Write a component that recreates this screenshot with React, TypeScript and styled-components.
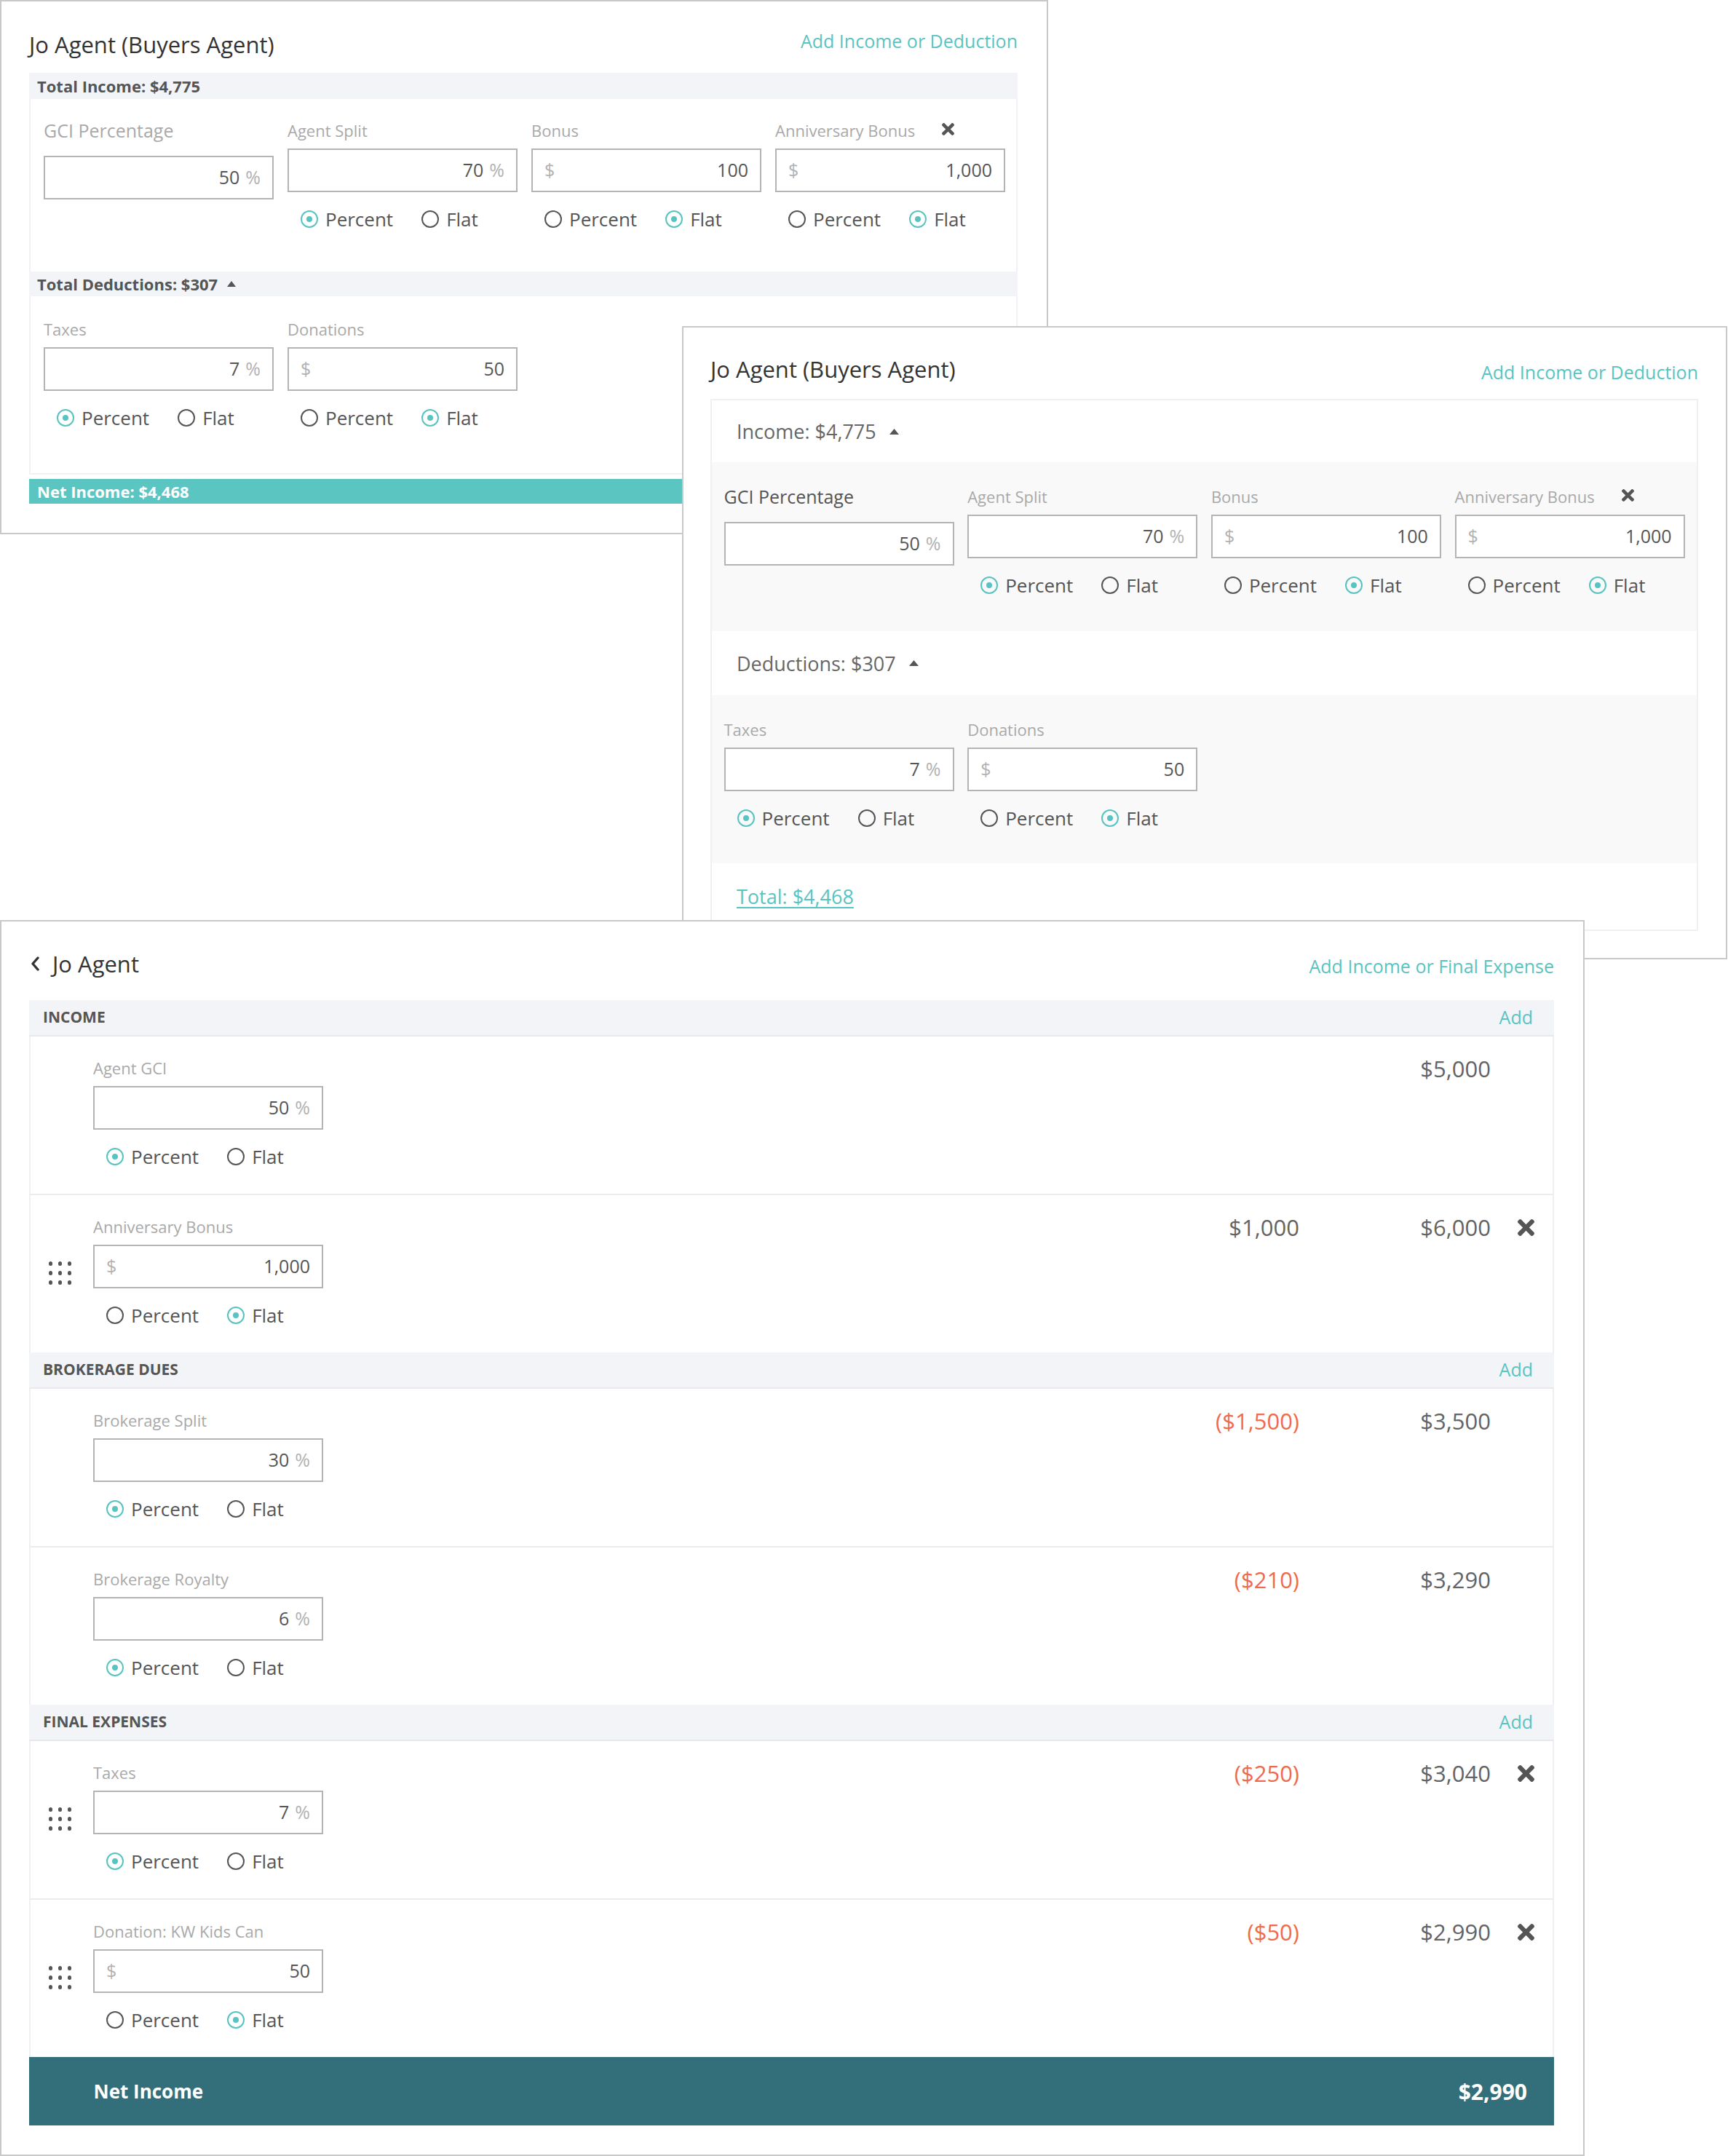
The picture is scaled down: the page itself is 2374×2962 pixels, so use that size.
import React from 'react';
import styled, { createGlobalStyle } from 'styled-components';

const TEAL = '#58c4c1';
const TEXT = '#555555';
const LIGHT = '#a9a9a9';

type Mode = 'percent' | 'flat';

interface FieldData {
  label: string;
  value: string;
  mode: Mode;
  big?: boolean;
  dark?: boolean;
  noRadios?: boolean;
  removable?: boolean;
}

interface LineItem extends FieldData {
  change?: string;
  negative?: boolean;
  running: string;
  draggable?: boolean;
  deletable?: boolean;
}

interface Section {
  title: string;
  items: LineItem[];
}

const GlobalStyle = createGlobalStyle`
  html, body { margin: 0; padding: 0; background: #ffffff; }
  body {
    font-family: 'Open Sans', 'Noto Sans', 'Liberation Sans', sans-serif;
    -webkit-font-smoothing: antialiased;
  }
  * { box-sizing: border-box; }
`;

const Canvas = styled.div`
  position: relative;
  width: 2374px;
  height: 2962px;
  overflow: hidden;
  background: #ffffff;
`;

const Win = styled.section<{ $x: number; $y: number; $w: number; $h: number; $z: number; $pad: string }>`
  position: absolute;
  left: ${(p) => p.$x}px;
  top: ${(p) => p.$y}px;
  width: ${(p) => p.$w}px;
  height: ${(p) => p.$h}px;
  z-index: ${(p) => p.$z};
  background: #ffffff;
  border: 2px solid #c9c9c9;
  padding: ${(p) => p.$pad};
  display: flex;
  flex-direction: column;
`;

const TitleRow = styled.header<{ $gap: number }>`
  display: flex;
  justify-content: space-between;
  align-items: flex-start;
  height: 42px;
  margin-bottom: ${(p) => p.$gap}px;
  flex: none;
`;

const Title = styled.h1`
  margin: 0;
  display: flex;
  align-items: center;
  gap: 18px;
  font-size: 31px;
  line-height: 42px;
  font-weight: 400;
  color: #333333;
`;

const BackIcon = styled.svg`
  margin-left: 3px;
  flex: none;
`;

const AddLink = styled.a<{ $offset: number }>`
  font-size: 25px;
  line-height: 42px;
  color: ${TEAL};
  margin-top: ${(p) => p.$offset}px;
  text-decoration: none;
  cursor: pointer;
`;

/* ---------- shared field ---------- */

const Field = styled.div`
  display: flex;
  flex-direction: column;
  width: 316px;
`;

const FieldLabel = styled.div<{ $big?: boolean; $dark?: boolean }>`
  display: flex;
  align-items: center;
  height: 32px;
  font-size: ${(p) => (p.$big ? 25 : 22)}px;
  line-height: 32px;
  color: ${(p) => (p.$dark ? TEXT : LIGHT)};
  margin-bottom: ${(p) => (p.$big ? 19 : 9)}px;
  white-space: nowrap;
`;

const LabelRemove = styled.span`
  display: inline-flex;
  margin-left: 37px;
  margin-top: -4px;
`;

const InputBox = styled.div`
  height: 60px;
  border: 2px solid #b4b4b4;
  background: #ffffff;
  display: flex;
  align-items: center;
  justify-content: space-between;
  padding: 0 16px 2px;
  font-size: 25px;
  color: ${TEXT};
`;

const Affix = styled.span`
  color: #b2b2b2;
`;

const Value = styled.span`
  display: flex;
  align-items: baseline;
  gap: 8px;
`;

const RadioRow = styled.div`
  display: flex;
  align-items: center;
  height: 36px;
  margin-top: 19px;
  padding-left: 18px;
  gap: 39px;
`;

const RadioOption = styled.label`
  display: flex;
  align-items: center;
  gap: 10px;
  font-size: 26px;
  color: ${TEXT};
  white-space: nowrap;
`;

const RadioCircle = styled.span<{ $on: boolean }>`
  width: 24px;
  height: 24px;
  border-radius: 50%;
  border: 2px solid ${(p) => (p.$on ? TEAL : '#555555')};
  display: flex;
  align-items: center;
  justify-content: center;
  flex: none;
  &::after {
    content: '';
    width: 8px;
    height: 8px;
    border-radius: 50%;
    background: ${(p) => (p.$on ? TEAL : 'transparent')};
  }
`;

function XIcon({ size, color = '#555555' }: { size: number; color?: string }) {
  return (
    <svg width={size} height={size} viewBox="0 80 352 352" aria-hidden="true">
      <path
        fill={color}
        d="M242.72 256l100.07-100.07c12.28-12.28 12.28-32.19 0-44.48l-22.24-22.240c-12.28-12.28-32.19-12.28-44.48 0L176 189.28 75.93 89.21c-12.28-12.28-32.19-12.28-44.48 0L9.21 111.45c-12.28 12.28-12.28 32.19 0 44.48L109.28 256 9.21 356.07c-12.28 12.28-12.28 32.19 0 44.48l22.24 22.24c12.28 12.28 32.2 12.28 44.48 0L176 322.72l100.07 100.07c12.28 12.28 32.2 12.28 44.48 0l22.24-22.24c12.28-12.28 12.28-32.19 0-44.48L242.72 256z"
      />
    </svg>
  );
}

function Caret({ w = 12, h = 8 }: { w?: number; h?: number }) {
  return (
    <svg width={w} height={h} viewBox={`0 0 ${w} ${h}`} aria-hidden="true">
      <path d={`M0 ${h} L${w / 2} 0 L${w} ${h} Z`} fill="#555555" />
    </svg>
  );
}

function ModeRadios({ mode }: { mode: Mode }) {
  return (
    <RadioRow>
      <RadioOption>
        <RadioCircle $on={mode === 'percent'} />
        Percent
      </RadioOption>
      <RadioOption>
        <RadioCircle $on={mode === 'flat'} />
        Flat
      </RadioOption>
    </RadioRow>
  );
}

function AmountField({ f }: { f: FieldData }) {
  return (
    <Field>
      <FieldLabel $big={f.big} $dark={f.dark}>
        {f.label}
        {f.removable && (
          <LabelRemove>
            <XIcon size={17} />
          </LabelRemove>
        )}
      </FieldLabel>
      <InputBox>
        <Affix>{f.mode === 'flat' ? '$' : ''}</Affix>
        <Value>
          {f.value}
          {f.mode === 'percent' && <Affix>%</Affix>}
        </Value>
      </InputBox>
      {!f.noRadios && <ModeRadios mode={f.mode} />}
    </Field>
  );
}

/* ---------- panel 1 ---------- */

const SummaryBar = styled.div<{ $h: number; $bg: string; $color: string; $mt?: number }>`
  height: ${(p) => p.$h}px;
  margin-top: ${(p) => p.$mt ?? 0}px;
  background: ${(p) => p.$bg};
  color: ${(p) => p.$color};
  display: flex;
  align-items: center;
  gap: 13px;
  padding-left: 11px;
  font-size: 22px;
  font-weight: 700;
  flex: none;
`;

const FieldBox = styled.div<{ $pt: number; $pb: number; $bottom?: boolean }>`
  border-left: 2px solid #f1f1f3;
  border-right: 2px solid #f1f1f3;
  border-bottom: ${(p) => (p.$bottom ? '2px solid #f1f1f3' : 'none')};
  padding: ${(p) => p.$pt}px 16px ${(p) => p.$pb}px 18px;
  flex: none;
`;

const FieldGrid = styled.div<{ $gap: number }>`
  display: grid;
  grid-template-columns: repeat(4, 316px);
  column-gap: ${(p) => p.$gap}px;
  align-items: start;
`;

/* ---------- panel 2 ---------- */

const Ledger = styled.div`
  border: 2px solid #f0f0f0;
  display: flex;
  flex-direction: column;
  flex: none;
`;

const LedgerHead = styled.div<{ $h: number }>`
  height: ${(p) => p.$h}px;
  background: #ffffff;
  display: flex;
  align-items: center;
  gap: 18px;
  padding-left: 34px;
  font-size: 27px;
  color: #666666;
`;

const LedgerBody = styled.div<{ $pt: number; $pb: number }>`
  background: #f9f9f9;
  padding: ${(p) => p.$pt}px 16px ${(p) => p.$pb}px 16.5px;
`;

const TotalLink = styled.a`
  font-size: 27px;
  color: ${TEAL};
  text-decoration: underline;
  text-underline-offset: 4px;
  cursor: pointer;
`;

/* ---------- panel 3 ---------- */

const SectionHead = styled.div`
  height: 50px;
  background: #f3f4f7;
  border-bottom: 2px solid #e8e9ec;
  display: flex;
  align-items: center;
  justify-content: space-between;
  padding: 0 29px 2px 19px;
  flex: none;
`;

const SectionTitle = styled.span`
  font-size: 21px;
  font-weight: 700;
  color: ${TEXT};
  text-transform: uppercase;
`;

const SectionAdd = styled.a`
  font-size: 25px;
  color: ${TEAL};
  cursor: pointer;
`;

const ItemRow = styled.div<{ $first: boolean }>`
  display: flex;
  align-items: flex-start;
  border-left: 2px solid #efeff1;
  border-right: 2px solid #efeff1;
  border-top: ${(p) => (p.$first ? 'none' : '2px solid #ececee')};
  padding: 27px 25.5px 33px 0;
  flex: none;
`;

const Handle = styled.div`
  width: 86px;
  align-self: stretch;
  display: flex;
  align-items: center;
  justify-content: center;
  padding-right: 5px;
`;

const DotGrid = styled.div`
  display: grid;
  grid-template-columns: repeat(3, 5.5px);
  grid-auto-rows: 5.5px;
  gap: 7.5px;
  margin-top: 4px;
`;

const Dot = styled.span`
  border-radius: 50%;
  background: #555555;
`;

const Spacer = styled.div`
  flex: 1;
`;

const AmountCell = styled.div<{ $w: number; $neg?: boolean }>`
  width: ${(p) => p.$w}px;
  text-align: right;
  font-size: 31px;
  line-height: 34px;
  margin-top: 0;
  color: ${(p) => (p.$neg ? '#f06b4c' : '#646464')};
  flex: none;
`;

const DeleteSlot = styled.div`
  width: 23px;
  height: 34px;
  margin-left: 36.5px;
  display: flex;
  align-items: center;
  flex: none;
`;

const NetBand = styled.div`
  height: 94px;
  background: #336f7a;
  color: #ffffff;
  display: flex;
  align-items: center;
  justify-content: space-between;
  padding: 0 37px 0 88.5px;
  font-weight: 700;
  flex: none;
`;

const NetLabel = styled.span`
  font-size: 26px;
`;

const NetValue = styled.span`
  font-size: 30px;
`;

/* ---------- data ---------- */

const incomeFields1: FieldData[] = [
  { label: 'GCI Percentage', value: '50', mode: 'percent', big: true, noRadios: true },
  { label: 'Agent Split', value: '70', mode: 'percent' },
  { label: 'Bonus', value: '100', mode: 'flat' },
  { label: 'Anniversary Bonus', value: '1,000', mode: 'flat', removable: true },
];

const deductionFields: FieldData[] = [
  { label: 'Taxes', value: '7', mode: 'percent' },
  { label: 'Donations', value: '50', mode: 'flat' },
];

const incomeFields2: FieldData[] = incomeFields1.map((f, i) => (i === 0 ? { ...f, dark: true } : f));

const sections: Section[] = [
  {
    title: 'Income',
    items: [
      { label: 'Agent GCI', value: '50', mode: 'percent', running: '$5,000' },
      {
        label: 'Anniversary Bonus',
        value: '1,000',
        mode: 'flat',
        change: '$1,000',
        running: '$6,000',
        draggable: true,
        deletable: true,
      },
    ],
  },
  {
    title: 'Brokerage Dues',
    items: [
      { label: 'Brokerage Split', value: '30', mode: 'percent', change: '($1,500)', negative: true, running: '$3,500' },
      { label: 'Brokerage Royalty', value: '6', mode: 'percent', change: '($210)', negative: true, running: '$3,290' },
    ],
  },
  {
    title: 'Final Expenses',
    items: [
      {
        label: 'Taxes',
        value: '7',
        mode: 'percent',
        change: '($250)',
        negative: true,
        running: '$3,040',
        draggable: true,
        deletable: true,
      },
      {
        label: 'Donation: KW Kids Can',
        value: '50',
        mode: 'flat',
        change: '($50)',
        negative: true,
        running: '$2,990',
        draggable: true,
        deletable: true,
      },
    ],
  },
];

function DragDots() {
  return (
    <DotGrid>
      {Array.from({ length: 9 }).map((_, i) => (
        <Dot key={i} />
      ))}
    </DotGrid>
  );
}

function LedgerRow({ item, first }: { item: LineItem; first: boolean }) {
  return (
    <ItemRow $first={first}>
      <Handle>{item.draggable && <DragDots />}</Handle>
      <AmountField f={item} />
      <Spacer />
      <AmountCell $w={200} $neg={item.negative}>
        {item.change ?? ''}
      </AmountCell>
      <AmountCell $w={263}>{item.running}</AmountCell>
      <DeleteSlot>{item.deletable && <XIcon size={23} />}</DeleteSlot>
    </ItemRow>
  );
}

export default function App() {
  return (
    <>
      <GlobalStyle />
      <Canvas>
        {/* Variant 1 */}
        <Win $x={0} $y={0} $w={1440} $h={734} $z={1} $pad="38px 40px 0 38px">
          <TitleRow $gap={17.5}>
            <Title>Jo Agent (Buyers Agent)</Title>
            <AddLink $offset={-5}>Add Income or Deduction</AddLink>
          </TitleRow>
          <SummaryBar $h={36} $bg="#f3f4f7" $color={TEXT}>
            Total Income: $4,775
          </SummaryBar>
          <FieldBox $pt={27.5} $pb={54}>
            <FieldGrid $gap={19}>
              {incomeFields1.map((f) => (
                <AmountField key={f.label} f={f} />
              ))}
            </FieldGrid>
          </FieldBox>
          <SummaryBar $h={34} $bg="#f3f4f7" $color={TEXT}>
            Total Deductions: $307
            <Caret />
          </SummaryBar>
          <FieldBox $pt={29} $pb={58} $bottom>
            <FieldGrid $gap={19}>
              {deductionFields.map((f) => (
                <AmountField key={f.label} f={f} />
              ))}
            </FieldGrid>
          </FieldBox>
          <SummaryBar $h={34} $bg="#5bc5c2" $color="#ffffff" $mt={6}>
            Net Income: $4,468
          </SummaryBar>
        </Win>

        {/* Variant 2 */}
        <Win $x={937} $y={448} $w={1436} $h={870} $z={2} $pad="36px 38px 0 37px">
          <TitleRow $gap={20}>
            <Title>Jo Agent (Buyers Agent)</Title>
            <AddLink $offset={4}>Add Income or Deduction</AddLink>
          </TitleRow>
          <Ledger>
            <LedgerHead $h={85}>
              Income: $4,775
              <Caret w={13} h={8} />
            </LedgerHead>
            <LedgerBody $pt={31} $pb={45}>
              <FieldGrid $gap={18.7}>
                {incomeFields2.map((f) => (
                  <AmountField key={f.label} f={f} />
                ))}
              </FieldGrid>
            </LedgerBody>
            <LedgerHead $h={88}>
              Deductions: $307
              <Caret w={13} h={8} />
            </LedgerHead>
            <LedgerBody $pt={31} $pb={44}>
              <FieldGrid $gap={18.7}>
                {deductionFields.map((f) => (
                  <AmountField key={f.label} f={f} />
                ))}
              </FieldGrid>
            </LedgerBody>
            <LedgerHead $h={91}>
              <TotalLink>Total: $4,468</TotalLink>
            </LedgerHead>
          </Ledger>
        </Win>

        {/* Variant 3 */}
        <Win $x={0} $y={1264} $w={2177} $h={1698} $z={3} $pad="37px 40px 0 38px">
          <TitleRow $gap={29}>
            <Title>
              <BackIcon width="11" height="20" viewBox="0 0 11 20" aria-hidden="true">
                <polyline
                  points="9,2 2,10 9,18"
                  fill="none"
                  stroke="#333333"
                  strokeWidth="3.4"
                  strokeLinecap="round"
                  strokeLinejoin="round"
                />
              </BackIcon>
              Jo Agent
            </Title>
            <AddLink $offset={2.5}>Add Income or Final Expense</AddLink>
          </TitleRow>
          {sections.map((s) => (
            <React.Fragment key={s.title}>
              <SectionHead>
                <SectionTitle>{s.title}</SectionTitle>
                <SectionAdd>Add</SectionAdd>
              </SectionHead>
              {s.items.map((item, i) => (
                <LedgerRow key={item.label} item={item} first={i === 0} />
              ))}
            </React.Fragment>
          ))}
          <NetBand>
            <NetLabel>Net Income</NetLabel>
            <NetValue>$2,990</NetValue>
          </NetBand>
        </Win>
      </Canvas>
    </>
  );
}
